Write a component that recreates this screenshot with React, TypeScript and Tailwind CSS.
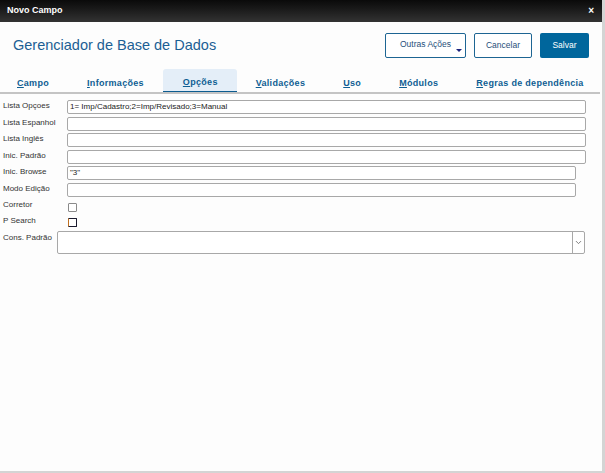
import { ChevronDown } from "lucide-react";

const tabs = [
  { label: "Campo" },
  { label: "Informações" },
  { label: "Opções", active: true },
  { label: "Validações" },
  { label: "Uso" },
  { label: "Módulos" },
  { label: "Regras de dependência" },
];

function Tab({ label, active }: { label: string; active?: boolean }) {
  return (
    <div
      className={`h-[24px] px-[19px] shrink-0 whitespace-nowrap flex items-center justify-center pt-[5px] text-[9px] font-bold tracking-[0.3px] text-[#0f5e93] ${
        active ? "bg-[#e4eef8] border-b-2 border-[#0d5c8f] rounded-t-[3px] pl-[20px]" : ""
      }`}
    >
      <span>
        <span className="underline">{label[0]}</span>
        {label.slice(1)}
      </span>
    </div>
  );
}

function TextRow({ label, value, wide = true }: { label: string; value?: string; wide?: boolean }) {
  return (
    <div className="flex h-[14px] items-start">
      <div className="w-[67px] pl-[3px] text-[8px] leading-[12px] text-[#333]">{label}</div>
      <div
        className={`${wide ? "w-[519px]" : "w-[509px]"} h-[14px] border border-[#a8a8a8] rounded-[2px] bg-white px-[2px] text-[8px] leading-[12px] text-[#222]`}
      >
        {value}
      </div>
    </div>
  );
}

export default function App() {
  return (
    <div className="w-[605px] h-[473px] flex bg-[#d4d4d4] overflow-hidden" style={{ fontFamily: '"Liberation Sans", Arial, sans-serif' }}>
      <div className="w-[602px] h-[471px] bg-[#fdfdfd] flex flex-col">
        {/* barra de título */}
        <div className="h-[22px] shrink-0 bg-gradient-to-b from-[#0a0a0a] to-[#333] flex items-center justify-between px-[7px]">
          <span className="text-white text-[9px] font-bold">Novo Campo</span>
          <span className="text-white text-[10px] font-bold leading-none pr-[1px]">×</span>
        </div>

        {/* cabeçalho */}
        <div className="h-[47px] shrink-0 flex items-start justify-between pl-[13px] pr-[13px] pt-[11px]">
          <h1 className="text-[14.5px] text-[#1c5f94] leading-[24px]">Gerenciador de Base de Dados</h1>
          <div className="flex gap-[8px]">
            <button className="relative w-[81px] h-[25px] border border-[#1d6593] rounded-[2px] bg-white text-[8.5px] text-[#1f4f7a] pb-[2px]">
              Outras Ações
              <span className="absolute right-[3px] bottom-[5px] w-0 h-0 border-l-[3px] border-r-[3px] border-t-[3px] border-l-transparent border-r-transparent border-t-[#1a237e]" />
            </button>
            <button className="w-[58px] h-[25px] border border-[#1d6593] rounded-[2px] bg-white text-[8.5px] text-[#1f4f7a]">
              Cancelar
            </button>
            <button className="w-[49px] h-[25px] rounded-[2px] bg-[#00669c] text-[8.5px] text-white">Salvar</button>
          </div>
        </div>

        {/* abas */}
        <div className="h-[25px] shrink-0 flex border-b-2 border-[#c4c4c4] mr-[2px] -ml-[2px] overflow-hidden">
          {tabs.map((t) => (
            <Tab key={t.label} label={t.label} active={t.active} />
          ))}
        </div>

        {/* formulário */}
        <div className="flex flex-col gap-[2.5px] pt-[6px]">
          <TextRow label="Lista Opçoes" value="1= Imp/Cadastro;2=Imp/Revisado;3=Manual" />
          <TextRow label="Lista Espanhol" />
          <TextRow label="Lista Inglês" />
          <TextRow label="Inic. Padrão" />
          <TextRow label="Inic. Browse" value={'"3"'} wide={false} />
          <TextRow label="Modo Edição" wide={false} />
        </div>

        <div className="flex h-[16px] mt-[2px] items-start">
          <div className="w-[68px] pl-[3px] text-[8px] leading-[12px] text-[#333]">Corretor</div>
          <div className="mt-[4px] w-[9px] h-[9px] border border-[#8a8a8a] rounded-[1px] bg-white" />
        </div>
        <div className="flex h-[16px] items-start">
          <div className="w-[68px] pl-[3px] text-[8px] leading-[12px] text-[#333]">P Search</div>
          <div className="mt-[3px] w-[9px] h-[9px] border border-[#1a1a2e] border-l-[#c07020] rounded-[1px] bg-white" />
        </div>
        <div className="flex items-start">
          <div className="w-[57px] pl-[3px] text-[8px] leading-[12px] pt-[1px] text-[#333]">Cons. Padrão</div>
          <div className="w-[528px] h-[23px] border border-[#a8a8a8] rounded-[2px] bg-white flex justify-end">
            <div className="w-[12px] h-full border-l border-[#a8a8a8] flex items-center justify-center">
              <ChevronDown className="w-[9px] h-[9px] text-[#777]" strokeWidth={2.5} />
            </div>
          </div>
        </div>
      </div>
    </div>
  );
}
